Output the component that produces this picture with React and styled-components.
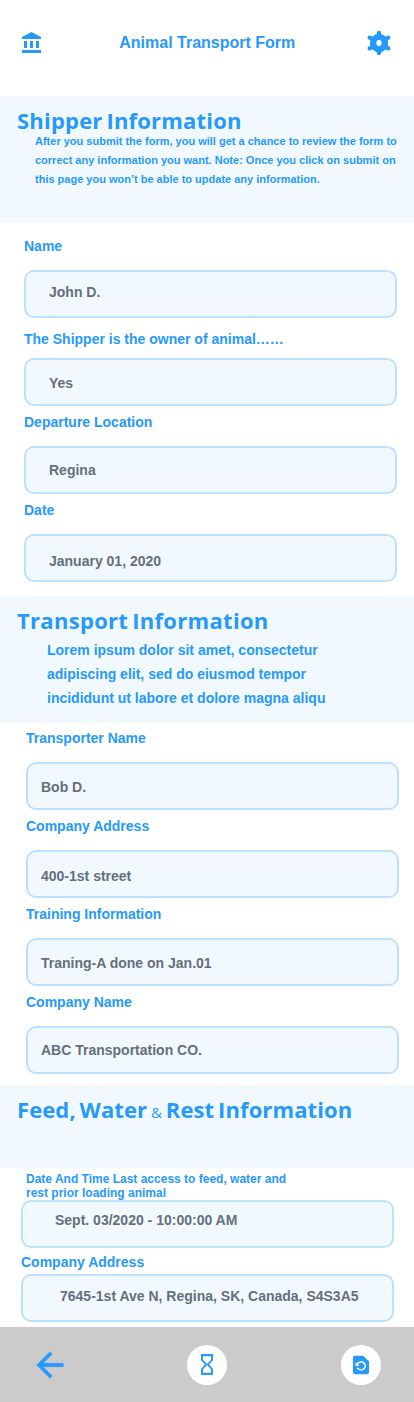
import React from 'react';
import styled, { createGlobalStyle } from 'styled-components';
import { MdArrowBack, MdHourglassEmpty, MdRestorePage } from 'react-icons/md';

const BLUE = '#2699fb';

const GlobalStyle = createGlobalStyle`
  *, *::before, *::after { box-sizing: border-box; }
  body { margin: 0; background: #fff; }
  svg { display: block; }
`;

const Page = styled.main`
  display: flex;
  flex-direction: column;
  width: 414px;
  height: 1402px;
  background: #fff;
  color: ${BLUE};
  font-family: 'Liberation Sans', Arial, sans-serif;
  font-weight: 700;
  white-space: nowrap;
`;

const Header = styled.header`
  display: flex;
  align-items: center;
  justify-content: space-between;
  height: 96px;
  padding: 0 22.5px 11px 20px;
`;

const Title = styled.h1`
  margin: 0;
  padding-left: 5px;
  font-size: 16px;
  line-height: 18px;
`;

const Band = styled.section`
  height: ${(p) => p.$height}px;
  padding: 9px 0 0 17px;
  background: #f1f9ff;
`;

const BandHeading = styled.h2`
  margin: 0;
  font-family: 'Open Sans', 'Noto Sans', sans-serif;
  font-size: 22px;
  font-weight: 700;
  line-height: 30px;
  letter-spacing: ${(p) => p.$spacing || 0}px;
  word-spacing: -2px;
`;

const Ampersand = styled.span`
  font-size: 15px;
  font-weight: 400;
`;

const Note = styled.p`
  margin: ${(p) => p.$top}px 0 0 ${(p) => p.$left}px;
  font-size: ${(p) => p.$size}px;
  line-height: ${(p) => p.$line}px;
`;

const Fields = styled.div`
  display: flex;
  flex-direction: column;
  width: 373px;
  height: ${(p) => p.$height}px;
  margin-left: ${(p) => p.$left}px;
`;

const Label = styled.label`
  margin: ${(p) => p.$above}px 0 ${(p) => p.$below}px;
  padding-left: ${(p) => (p.$small ? 5 : 0)}px;
  font-size: ${(p) => (p.$small ? 12 : 14)}px;
  line-height: ${(p) => (p.$small ? 14 : 16)}px;
`;

const Value = styled.div`
  flex: none;
  height: 48px;
  padding: ${(p) => p.$top}px 0 0 ${(p) => p.$left}px;
  border: 2px solid #bce0fd;
  border-radius: 10px;
  background: #f1f9ff;
  color: #656f7b;
  font-size: 14px;
  line-height: 16px;
`;

const Footer = styled.footer`
  display: flex;
  align-items: center;
  justify-content: space-between;
  height: 75px;
  padding: 0 33px 0 30px;
  background: #cbcbcb;
`;

const RoundButton = styled.span`
  display: flex;
  align-items: center;
  justify-content: center;
  width: 40px;
  height: 40px;
  border-radius: 50%;
  background: #fff;
`;

const ArrowSlot = styled.span`
  width: 43px;
`;

const ArrowIcon = styled(MdArrowBack)`
  width: 40px;
  height: 40px;

  path { stroke: ${BLUE}; stroke-width: 0.3; }
  path[fill='none'] { stroke: none; }
`;

const HourglassIcon = styled(MdHourglassEmpty)`
  width: 24px;
  height: 25px;
`;

const RestoreIcon = styled(MdRestorePage)`
  width: 24px;
  height: 22px;
`;

function Bank() {
  return (
    <svg width="24" height="24" viewBox="0 0 24 24" fill={BLUE}>
      <path d="M4 10v7h3v-7H4zm6 0v7h3v-7h-3zM2 22h19v-3H2v3zm14-12v7h3v-7h-3zm-4.500-9L2 6v2h19V6l-9.500-5z" />
    </svg>
  );
}

function Gear() {
  return (
    <svg width="26" height="26" viewBox="-13 -13 26 26">
      <circle r="9.2" fill={BLUE} />
      <path
        stroke={BLUE}
        strokeWidth="4.4"
        strokeLinecap="round"
        d="M0-10V10M-9.300-5.300L9.300 5.300M-9.300 5.300L9.300-5.300"
      />
      <ellipse rx="2.600" ry="3.100" fill="#fff" />
    </svg>
  );
}

function Field({ label, value, above = 8, below = 16, top = 15, left, small }) {
  return (
    <>
      <Label $above={above} $below={below} $small={small}>{label}</Label>
      <Value $top={top} $left={left}>{value}</Value>
    </>
  );
}

export default function App() {
  return (
    <>
      <GlobalStyle />
      <Page>
        <Header>
          <Bank />
          <Title>Animal Transport Form</Title>
          <Gear />
        </Header>

        <Band $height={127}>
          <BandHeading $spacing={0.2}>Shipper Information</BandHeading>
          <Note $top={-3} $left={18} $size={11} $line={19}>
            After you submit the form, you will get a chance to review the form to<br />
            correct any information you want. Note: Once you click on submit on<br />
            this page you won’t be able to update any information.
          </Note>
        </Band>
        <Fields $left={24} $height={373}>
          <Field label="Name" value="John D." above={15} top={12} left={23} />
          <Field label="The Shipper is the owner of animal……" value="Yes" above={13} below={11} left={23} />
          <Field label="Departure Location" value="Regina" top={14} left={23} />
          <Field label="Date" value="January 01, 2020" top={17} left={23} />
        </Fields>

        <Band $height={127}>
          <BandHeading $spacing={0.3}>Transport Information</BandHeading>
          <Note $top={3} $left={30} $size={14} $line={24}>
            Lorem ipsum dolor sit amet, consectetur<br />
            adipiscing elit, sed do eiusmod tempor<br />
            incididunt ut labore et dolore magna aliqu
          </Note>
        </Band>
        <Fields $left={26} $height={362}>
          <Field label="Transporter Name" value="Bob D." above={7} left={13} />
          <Field label="Company Address" value="400-1st street" top={16} left={13} />
          <Field label="Training Information" value="Traning-A done on Jan.01" left={13} />
          <Field label="Company Name" value="ABC Transportation CO." top={14} left={13} />
        </Fields>

        <Band $height={83}>
          <BandHeading $spacing={0.1}>Feed, Water <Ampersand>&amp;</Ampersand> Rest Information</BandHeading>
        </Band>
        <Fields $left={21} $height={159}>
          <Field
            label={<>Date And Time Last access to feed, water and<br />rest prior loading animal</>}
            value="Sept. 03/2020 - 10:00:00 AM"
            above={4}
            below={0}
            top={10}
            left={32}
            small
          />
          <Field label="Company Address" value="7645-1st Ave N, Regina, SK, Canada, S4S3A5" above={6} below={4} top={12} left={37} />
        </Fields>

        <Footer>
          <ArrowSlot><ArrowIcon /></ArrowSlot>
          <RoundButton><HourglassIcon preserveAspectRatio="none" /></RoundButton>
          <RoundButton><RestoreIcon preserveAspectRatio="none" /></RoundButton>
        </Footer>
      </Page>
    </>
  );
}
